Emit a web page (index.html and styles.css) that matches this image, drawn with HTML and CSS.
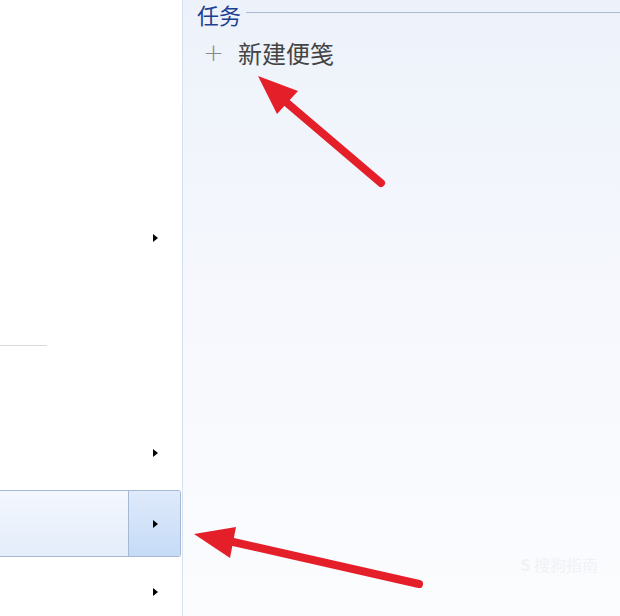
FILE: index.html
```html
<!DOCTYPE html>
<html lang="zh">
<head>
<meta charset="utf-8">
<link rel="stylesheet" href="styles.css">
</head>
<body>
<div class="screen">
  <div class="left">
    <div class="spacer s1"></div>
    <div class="row"><span class="tri"></span></div>
    <div class="spacer s2"></div>
    <div class="sep"></div>
    <div class="spacer s3"></div>
    <div class="row"><span class="tri"></span></div>
    <div class="row hl">
      <div class="hl-main"></div>
      <div class="hl-side"><span class="tri"></span></div>
    </div>
    <div class="row"><span class="tri"></span></div>
  </div>
  <div class="right">
    <div class="heading">
      <span class="title">任务</span>
      <span class="rule"></span>
    </div>
    <div class="task"><span class="plus">+</span><span class="label">新建便笺</span></div>
    <div class="watermark"><span class="wm-s">S</span> 搜狗指南</div>
  </div>
  <svg class="arrows" width="620" height="616" viewBox="0 0 620 616">
    <line x1="381" y1="183" x2="280" y2="97" stroke="#e51f2a" stroke-width="8" stroke-linecap="round"/>
    <polygon points="258,76 298,91 277,114" fill="#e51f2a"/>
    <line x1="419" y1="584" x2="220" y2="539" stroke="#e51f2a" stroke-width="8" stroke-linecap="round"/>
    <polygon points="194,534 236,527 230,558" fill="#e51f2a"/>
  </svg>
</div>
</body>
</html>
```
FILE: styles.css
```css
html, body {
  margin: 0;
  padding: 0;
}
body {
  width: 620px;
  height: 616px;
  overflow: hidden;
  font-family: "Noto Sans CJK SC", "Noto Sans", sans-serif;
}
.screen {
  position: relative;
  display: flex;
  width: 620px;
  height: 616px;
  overflow: hidden;
}
.left {
  width: 182px;
  flex: none;
  background: #ffffff;
  display: flex;
  flex-direction: column;
}
.left > * { flex: none; }
.spacer.s1 { height: 203px; }
.spacer.s2 { height: 72px; }
.spacer.s3 { height: 72px; }
.sep {
  width: 47px;
  height: 1px;
  background: #dadada;
}
.row {
  height: 70px;
  display: flex;
  align-items: center;
  justify-content: flex-end;
  padding-right: 24px;
}
.tri {
  width: 0;
  height: 0;
  border-top: 4px solid transparent;
  border-bottom: 4px solid transparent;
  border-left: 5px solid #000;
}
.row.hl {
  height: 67px;
  margin-top: 2px;
  margin-right: 1px;
  padding: 0;
  box-sizing: border-box;
  border: 1px solid #a6b9d3;
  border-left: none;
  border-radius: 0 3px 3px 0;
  align-items: stretch;
  justify-content: flex-start;
}
.hl-main {
  width: 128px;
  border-right: 1px solid #a6b9d3;
  background: linear-gradient(#f3f7fe, #e4edfb);
}
.hl-side {
  flex: 1;
  display: flex;
  align-items: center;
  justify-content: flex-end;
  padding-right: 22px;
  background: linear-gradient(#dfeafb, #c6dbf7);
  border-radius: 0 2px 2px 0;
}
.right {
  flex: 1;
  position: relative;
  border-left: 1px solid #d6e0ee;
  background: linear-gradient(#edf2fa, #f6f8fd 50%, #fbfcfe);
  padding-left: 14px;
}
.heading {
  display: flex;
  align-items: flex-start;
  height: 28px;
}
.title {
  font-size: 22px;
  line-height: 28px;
  color: #1b3f91;
}
.rule {
  flex: 1;
  height: 1px;
  background: #a9bad2;
  margin-left: 5px;
  margin-top: 12px;
}
.task {
  display: flex;
  align-items: center;
  margin-top: 9px;
  padding-left: 6px;
  height: 32px;
}
.plus {
  font-family: "DejaVu Sans", sans-serif;
  font-weight: 200;
  font-size: 25px;
  line-height: 32px;
  color: #8a8a8a;
  width: 35px;
}
.label {
  font-size: 24px;
  line-height: 32px;
  color: #444;
}
.watermark {
  position: absolute;
  right: 22px;
  bottom: 40px;
  font-size: 16px;
  color: #f1f2f5;
}
.wm-s {
  font-weight: bold;
}
.arrows {
  position: absolute;
  left: 0;
  top: 0;
  pointer-events: none;
}
```
